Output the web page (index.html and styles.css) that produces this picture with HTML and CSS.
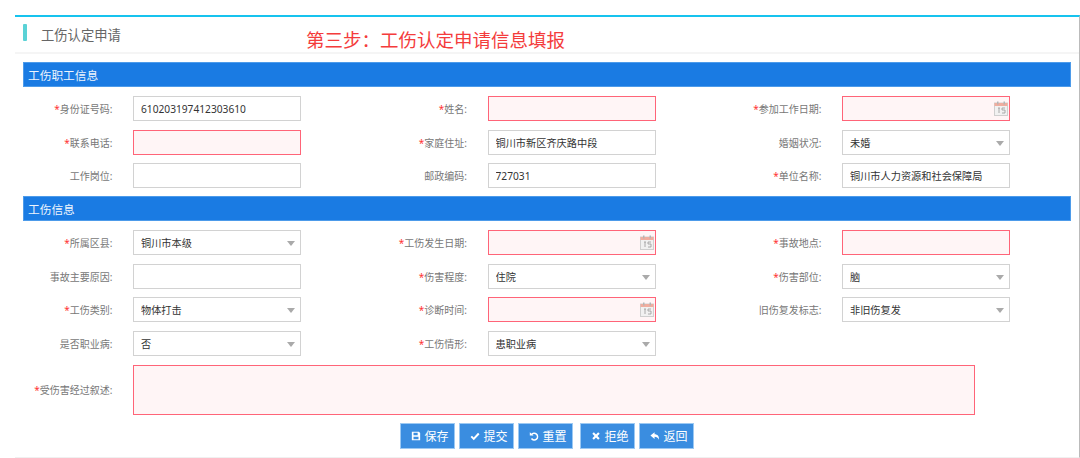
FILE: index.html
```html
<!DOCTYPE html>
<html>
<head>
    <title>工伤认定申请</title>
    <meta charset="utf-8">
    <link rel="stylesheet" href="styles.css">
</head>
<body>
    <svg class="icon-defs" width="0" height="0">
        <symbol id="cal" viewBox="0 0 14 15">
            <rect x="0.5" y="2" width="13" height="12.5" fill="#f1f1f1" stroke="#cfcfcf"/>
            <rect x="0.5" y="2" width="13" height="3" fill="#f0ad9f"/>
            <rect x="3" y="0.5" width="1.5" height="3" fill="#b5b5b5"/>
            <rect x="9.5" y="0.5" width="1.5" height="3" fill="#b5b5b5"/>
            <path d="M4 7h2M5 7v5M8 7h3M8 7v2h3v3H8" fill="none" stroke="#999" stroke-width="0.800"/>
        </symbol>
    </svg>

    <div class="panel">
        <div class="panel-head">
            <span class="accent"></span>
            <span class="panel-title">工伤认定申请</span>
            <span class="step-note">第三步：工伤认定申请信息填报</span>
        </div>

        <div class="section-bar">工伤职工信息</div>
        <div class="form-grid">
            <div class="field">
                <label class="req">身份证号码:</label>
                <div class="control"><input value="610203197412303610"></div>
            </div>
            <div class="field">
                <label class="req">姓名:</label>
                <div class="control"><input class="invalid"></div>
            </div>
            <div class="field">
                <label class="req">参加工作日期:</label>
                <div class="control"><input class="invalid"><svg class="cal"><use href="#cal"/></svg></div>
            </div>
            <div class="field">
                <label class="req">联系电话:</label>
                <div class="control"><input class="invalid"></div>
            </div>
            <div class="field">
                <label class="req">家庭住址:</label>
                <div class="control"><input value="铜川市新区齐庆路中段"></div>
            </div>
            <div class="field">
                <label>婚姻状况:</label>
                <div class="control combo"><input value="未婚"></div>
            </div>
            <div class="field">
                <label>工作岗位:</label>
                <div class="control"><input></div>
            </div>
            <div class="field">
                <label>邮政编码:</label>
                <div class="control"><input value="727031"></div>
            </div>
            <div class="field">
                <label class="req">单位名称:</label>
                <div class="control"><input value="铜川市人力资源和社会保障局"></div>
            </div>
        </div>

        <div class="section-bar">工伤信息</div>
        <div class="form-grid">
            <div class="field">
                <label class="req">所属区县:</label>
                <div class="control combo"><input value="铜川市本级"></div>
            </div>
            <div class="field">
                <label class="req">工伤发生日期:</label>
                <div class="control"><input class="invalid"><svg class="cal"><use href="#cal"/></svg></div>
            </div>
            <div class="field">
                <label class="req">事故地点:</label>
                <div class="control"><input class="invalid"></div>
            </div>
            <div class="field">
                <label>事故主要原因:</label>
                <div class="control"><input></div>
            </div>
            <div class="field">
                <label class="req">伤害程度:</label>
                <div class="control combo"><input value="住院"></div>
            </div>
            <div class="field">
                <label class="req">伤害部位:</label>
                <div class="control combo"><input value="脑"></div>
            </div>
            <div class="field">
                <label class="req">工伤类别:</label>
                <div class="control combo"><input value="物体打击"></div>
            </div>
            <div class="field">
                <label class="req">诊断时间:</label>
                <div class="control"><input class="invalid"><svg class="cal"><use href="#cal"/></svg></div>
            </div>
            <div class="field">
                <label>旧伤复发标志:</label>
                <div class="control combo"><input value="非旧伤复发"></div>
            </div>
            <div class="field">
                <label>是否职业病:</label>
                <div class="control combo"><input value="否"></div>
            </div>
            <div class="field">
                <label class="req">工伤情形:</label>
                <div class="control combo"><input value="患职业病"></div>
            </div>
            <div class="field field-wide">
                <label class="req">受伤害经过叙述:</label>
                <textarea class="invalid"></textarea>
            </div>
        </div>

        <div class="actions">
            <button class="btn">
                <svg viewBox="0 0 12 12"><path d="M1 1h8.5L11 2.500V11H1z M3 2v3h5V2z M3 7v3h6V7z" fill="#fff" fill-rule="evenodd"/></svg>保存
            </button>
            <button class="btn">
                <svg viewBox="0 0 12 12"><path d="M1.500 6.500L4.500 9.500L10.500 3" fill="none" stroke="#fff" stroke-width="2.400"/></svg>提交
            </button>
            <button class="btn">
                <svg viewBox="0 0 12 12"><path d="M3 4.500A4 4 0 1 1 3 9" fill="none" stroke="#fff" stroke-width="1.700"/><path d="M1 1.500L5.500 5.500H1z" fill="#fff"/></svg>重置
            </button>
            <button class="btn btn-gap">
                <svg viewBox="0 0 12 12"><path d="M2.500 2.500L9.500 9.500M9.500 2.500L2.500 9.500" fill="none" stroke="#fff" stroke-width="2.600"/></svg>拒绝
            </button>
            <button class="btn">
                <svg viewBox="0 0 12 12"><path d="M5.500 1.500L0.500 5.500L5.500 9.500V7C8 7 9.500 8 10.500 10.500C11.500 6.500 9 4 5.500 4z" fill="#fff"/></svg>返回
            </button>
        </div>
    </div>
</body>
</html>
```

FILE: styles.css
```css
body {
    margin: 0;
    background-color: #fff;
    font-family: "Noto Sans", "Noto Sans CJK SC", sans-serif;
    font-size: 10px;
    color: #333;
}
.icon-defs {
    display: block;
}
.panel {
    margin: 15px 0 0 15px;
    height: 443px;
    box-sizing: border-box;
    border-top: 2px solid #16c3ee;
    border-right: 1px solid #bbb;
    border-bottom: 1px solid #f0f0f0;
}
.panel-head {
    position: relative;
    display: flex;
    align-items: center;
    height: 37px;
    box-sizing: border-box;
    padding-left: 8px;
    border-bottom: 2px solid #f5f5f5;
}
.accent {
    width: 4px;
    height: 17px;
    margin-top: -4px;
    margin-right: 14px;
    border-radius: 1px;
    background-color: #5ad2d6;
}
.panel-title {
    font-size: 13.3px;
    color: #666;
}
.step-note {
    position: absolute;
    left: 291px;
    top: 10px;
    font-size: 18.500px;
    line-height: 26px;
    color: #f43c3c;
}
.section-bar {
    height: 25px;
    line-height: 25px;
    box-sizing: border-box;
    margin: 8px 8px 0;
    padding-left: 4px;
    border: 1px solid #4d9bea;
    background-color: #1a7be3;
    color: #eef5fd;
    font-size: 11.700px;
}
.form-grid {
    display: grid;
    grid-template-columns: repeat(3, 354.500px);
    row-gap: 8.500px;
    margin: 9px 0 0 8px;
}
.field {
    display: flex;
    align-items: center;
}
.field label {
    width: 89.500px;
    margin-right: 20.500px;
    text-align: right;
    white-space: nowrap;
    color: #777;
}
.field label.req::before {
    content: "*";
    color: #f33;
}
.field-wide {
    grid-column: 1 / -1;
    margin-top: 0.500px;
}
.control {
    position: relative;
    width: 168px;
    height: 25px;
}
.control input {
    display: block;
    width: 100%;
    height: 100%;
    box-sizing: border-box;
    padding: 0 7px;
    border: 1px solid #d2d2d2;
    outline: none;
    background-color: #fff;
    font: inherit;
    font-size: 10.200px;
    color: #333;
}
textarea {
    display: block;
    width: 842px;
    height: 50px;
    box-sizing: border-box;
    border: 1px solid #d2d2d2;
    outline: none;
    resize: none;
}
.control input.invalid,
textarea.invalid {
    border-color: #ff6478;
    background-color: #fff5f6;
}
.combo::after {
    content: "";
    position: absolute;
    right: 6px;
    top: 11px;
    border-left: 4px solid transparent;
    border-right: 4px solid transparent;
    border-top: 5px solid #aaa;
}
.cal {
    position: absolute;
    right: 2px;
    top: 5px;
    width: 14px;
    height: 15px;
}
.actions {
    display: flex;
    justify-content: center;
    gap: 4px;
    margin-top: 8px;
}
.btn {
    display: flex;
    align-items: center;
    justify-content: center;
    gap: 3px;
    width: 55px;
    height: 26px;
    box-sizing: border-box;
    padding: 1px 0 0 5px;
    border: 1px solid #9cc9f3;
    background-color: #3a8de0;
    color: #fff;
    font: inherit;
    font-size: 12px;
}
.btn svg {
    width: 10px;
    height: 10px;
}
.btn-gap {
    margin-left: 3px;
}
```
